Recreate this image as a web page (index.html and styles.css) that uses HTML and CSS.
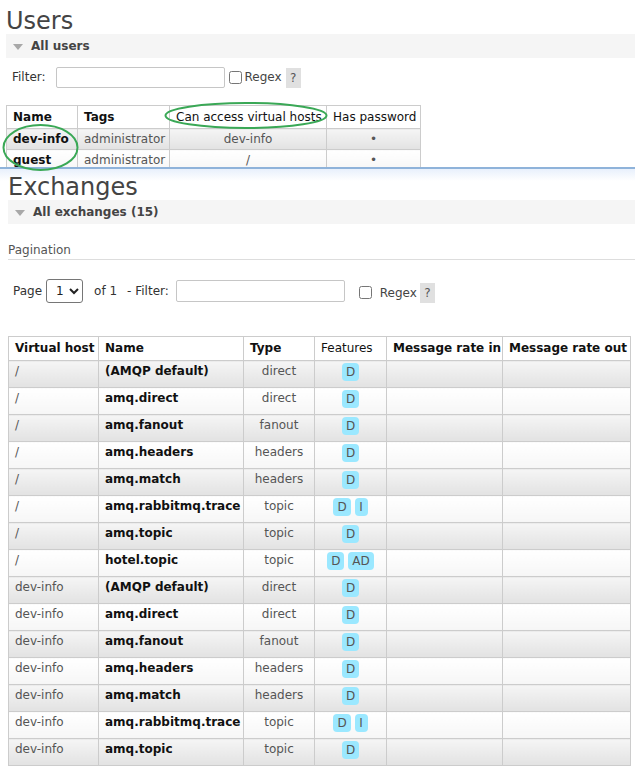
FILE: index.html
```html
<!DOCTYPE html>
<html>
<head>
<meta charset="utf-8">
<title>RabbitMQ Management</title>
<link rel="stylesheet" href="styles.css">
</head>
<body>
<div class="shot-wrap">
  <div class="users-shot">
    <h1 class="page-title">Users</h1>
    <h2 class="section-bar"><span class="tri"></span>All users</h2>
    <div class="filter-row">
      <span class="lbl">Filter:</span>
      <input type="text" class="text-input users-filter">
      <input type="checkbox" class="cb users-cb">
      <span class="regex users-regex">Regex</span>
      <span class="help users-help">?</span>
    </div>
    <table class="list users-table">
      <colgroup><col class="uc1"><col class="uc2"><col class="uc3"><col class="uc4"></colgroup>
      <thead>
        <tr><th class="b">Name</th><th class="b">Tags</th><th>Can access virtual hosts</th><th>Has password</th></tr>
      </thead>
      <tbody>
        <tr class="alt1"><td class="name">dev-info</td><td>administrator</td><td class="c">dev-info</td><td class="c">•</td></tr>
        <tr class="alt2"><td class="name">guest</td><td>administrator</td><td class="c">/</td><td class="c">•</td></tr>
      </tbody>
    </table>
  </div>
  <svg class="annot" width="635" height="180" viewBox="0 0 635 180">
    <ellipse cx="246" cy="115.5" rx="80.5" ry="12.5" fill="none" stroke="#3aa856" stroke-width="2"/>
    <ellipse cx="40.5" cy="147.5" rx="37" ry="22.5" fill="none" stroke="#3aa856" stroke-width="2"/>
  </svg>
</div>

<div class="exchanges">
  <h1 class="page-title">Exchanges</h1>
  <h2 class="section-bar"><span class="tri"></span>All exchanges (15)</h2>
  <h3 class="pagination-title">Pagination</h3>
  <div class="pager-row">
    <span class="lbl">Page</span>
    <select class="page-select"><option>1</option></select>
    <span class="lbl of">of 1</span>
    <span class="lbl dash">- Filter:</span>
    <input type="text" class="text-input ex-filter">
    <input type="checkbox" class="cb ex-cb">
    <span class="regex ex-regex">Regex</span>
    <span class="help ex-help">?</span>
  </div>
  <table class="list ex-table">
    <colgroup><col class="ec1"><col class="ec2"><col class="ec3"><col class="ec4"><col class="ec5"><col class="ec6"></colgroup>
    <thead>
      <tr><th class="b">Virtual host</th><th class="b">Name</th><th class="b">Type</th><th>Features</th><th class="b">Message rate in</th><th class="b">Message rate out</th></tr>
    </thead>
    <tbody>
      <tr class="alt1"><td>/</td><td class="name">(AMQP default)</td><td class="c">direct</td><td class="feat"><abbr class="badge">D</abbr></td><td></td><td></td></tr>
      <tr class="alt2"><td>/</td><td class="name">amq.direct</td><td class="c">direct</td><td class="feat"><abbr class="badge">D</abbr></td><td></td><td></td></tr>
      <tr class="alt1"><td>/</td><td class="name">amq.fanout</td><td class="c">fanout</td><td class="feat"><abbr class="badge">D</abbr></td><td></td><td></td></tr>
      <tr class="alt2"><td>/</td><td class="name">amq.headers</td><td class="c">headers</td><td class="feat"><abbr class="badge">D</abbr></td><td></td><td></td></tr>
      <tr class="alt1"><td>/</td><td class="name">amq.match</td><td class="c">headers</td><td class="feat"><abbr class="badge">D</abbr></td><td></td><td></td></tr>
      <tr class="alt2"><td>/</td><td class="name">amq.rabbitmq.trace</td><td class="c">topic</td><td class="feat"><abbr class="badge">D</abbr> <abbr class="badge">I</abbr></td><td></td><td></td></tr>
      <tr class="alt1"><td>/</td><td class="name">amq.topic</td><td class="c">topic</td><td class="feat"><abbr class="badge">D</abbr></td><td></td><td></td></tr>
      <tr class="alt2"><td>/</td><td class="name">hotel.topic</td><td class="c">topic</td><td class="feat"><abbr class="badge">D</abbr> <abbr class="badge">AD</abbr></td><td></td><td></td></tr>
      <tr class="alt1"><td>dev-info</td><td class="name">(AMQP default)</td><td class="c">direct</td><td class="feat"><abbr class="badge">D</abbr></td><td></td><td></td></tr>
      <tr class="alt2"><td>dev-info</td><td class="name">amq.direct</td><td class="c">direct</td><td class="feat"><abbr class="badge">D</abbr></td><td></td><td></td></tr>
      <tr class="alt1"><td>dev-info</td><td class="name">amq.fanout</td><td class="c">fanout</td><td class="feat"><abbr class="badge">D</abbr></td><td></td><td></td></tr>
      <tr class="alt2"><td>dev-info</td><td class="name">amq.headers</td><td class="c">headers</td><td class="feat"><abbr class="badge">D</abbr></td><td></td><td></td></tr>
      <tr class="alt1"><td>dev-info</td><td class="name">amq.match</td><td class="c">headers</td><td class="feat"><abbr class="badge">D</abbr></td><td></td><td></td></tr>
      <tr class="alt2"><td>dev-info</td><td class="name">amq.rabbitmq.trace</td><td class="c">topic</td><td class="feat"><abbr class="badge">D</abbr> <abbr class="badge">I</abbr></td><td></td><td></td></tr>
      <tr class="alt1"><td>dev-info</td><td class="name">amq.topic</td><td class="c">topic</td><td class="feat"><abbr class="badge">D</abbr></td><td></td><td></td></tr>
    </tbody>
  </table>
</div>
</body>
</html>
```

FILE: styles.css
```css
* { box-sizing: border-box; }

html, body {
  margin: 0;
  padding: 0;
  background: #fff;
}

body {
  width: 635px;
  overflow: hidden;
  font-family: "DejaVu Sans", Verdana, sans-serif;
  font-size: 12px;
  line-height: 15px;
  color: #484848;
}

/* ---------- top (users) screenshot ---------- */
.shot-wrap {
  position: relative;
}

.users-shot {
  height: 167px;
  overflow: hidden;
  padding: 8px 0 0 6px;
}

.annot {
  position: absolute;
  left: 0;
  top: 0;
  pointer-events: none;
  z-index: 2;
}

.page-title {
  margin: 0;
  font-size: 24px;
  line-height: 26px;
  font-weight: normal;
  color: #444;
}

.section-bar {
  display: flex;
  align-items: center;
  margin: 0;
  height: 24px;
  background: #f5f5f5;
  font-size: 12px;
  font-weight: bold;
  color: #444;
}

.tri {
  width: 0;
  height: 0;
  margin: 1px 8px 0 7px;
  border-left: 5.5px solid transparent;
  border-right: 5.5px solid transparent;
  border-top: 6px solid #a8a8a8;
}

.lbl {
  color: #333;
  white-space: nowrap;
}

.text-input {
  height: 21px;
  border: 1px solid #c6c6c6;
  border-radius: 2px;
  background: #fff;
  padding: 0 3px;
  font: 12px "DejaVu Sans", sans-serif;
}

.cb {
  width: 13px;
  height: 13px;
  margin: 0;
}

.regex {
  color: #444;
}

.help {
  display: inline-block;
  width: 15px;
  height: 20px;
  line-height: 20px;
  text-align: center;
  background: #e0e0e0;
  color: #555;
}

.filter-row {
  display: flex;
  align-items: center;
  height: 21px;
  margin: 9px 0 0 6px;
}

.users-filter {
  width: 169px;
  margin-left: 10px;
}

.users-cb {
  margin-left: 4px;
}

.users-regex {
  margin-left: 3px;
}

.users-help {
  margin-left: 4px;
}

/* ---------- tables ---------- */
table.list {
  border-collapse: collapse;
  table-layout: fixed;
  border: 1px solid #ccc;
}

table.list th,
table.list td {
  border: 1px solid #ccc;
  white-space: nowrap;
  overflow: hidden;
  line-height: 15px;
}

table.list th {
  background: #fff;
  text-align: left;
  font-weight: normal;
  color: #111;
}

table.list th.b {
  font-weight: bold;
}

table.list td {
  color: #555;
  vertical-align: top;
}

table.list td.name {
  font-weight: bold;
  color: #111;
}

table.list td.c {
  text-align: center;
}

tr.alt1 td {
  background: linear-gradient(to bottom, #f5f5f5, #e2e2e2);
}

tr.alt2 td {
  background: linear-gradient(to bottom, #ffffff, #f6f6f6);
}

.users-table {
  margin-top: 17px;
  width: 415px;
}

.users-table th {
  padding: 4px 6px 3px;
}

.users-table td {
  padding: 3px 6px 2px;
}

.uc1 { width: 71px; }
.uc2 { width: 92px; }
.uc3 { width: 157px; }
.uc4 { width: 94px; }

/* ---------- exchanges ---------- */
.exchanges {
  border-top: 2px solid #8fb3da;
  background: linear-gradient(to bottom, #e8f0fc 0px, #ffffff 12px) no-repeat;
  padding: 5px 0 0 8px;
}

.pagination-title {
  margin: 19px 0 0;
  padding-bottom: 1px;
  font-size: 12px;
  line-height: 15px;
  font-weight: normal;
  color: #555;
  border-bottom: 1px solid #ddd;
}

.pager-row {
  display: flex;
  align-items: center;
  height: 24px;
  margin: 19px 0 0 5px;
}

.page-select {
  width: 37px;
  height: 24px;
  margin-left: 4px;
  padding: 0 0 0 5px;
  font: 12px "DejaVu Sans", sans-serif;
  color: #222;
  border: 1px solid #767676;
  border-radius: 3px;
  background-color: #fff;
}

.of {
  margin-left: 11px;
}

.dash {
  margin-left: 10px;
}

.ex-filter {
  width: 169px;
  height: 22px;
  margin-left: 7px;
}

.ex-cb {
  margin-left: 14px;
  margin-top: 2px;
}

.ex-regex {
  margin-left: 8px;
  margin-top: 4px;
}

.ex-help {
  margin-left: 3px;
  margin-top: 4px;
}

.ex-table {
  margin-top: 33px;
  width: 623px;
}

.ex-table th {
  padding: 4px 6px 4px;
}

.ex-table td {
  padding: 3px 6px 0;
}

.ex-table td.feat {
  text-align: center;
  padding: 2px 2px 6px;
}

.ec1 { width: 90px; }
.ec2 { width: 145px; }
.ec3 { width: 71px; }
.ec4 { width: 72px; }
.ec5 { width: 116px; }
.ec6 { width: 128px; }

abbr.badge {
  display: inline-block;
  vertical-align: top;
  min-width: 13px;
  height: 18px;
  line-height: 18px;
  padding: 0 4px;
  border-radius: 4px;
  background: #9be8ff;
  color: #555;
  text-decoration: none;
  text-align: center;
}
```
